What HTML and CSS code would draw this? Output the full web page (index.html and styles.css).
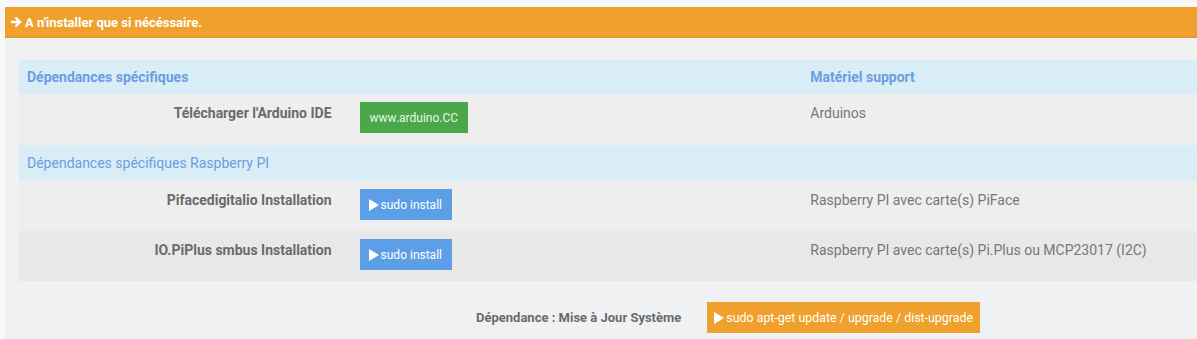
FILE: index.html
```html
<!DOCTYPE html>
<html lang="fr">
<head>
  <meta charset="UTF-8">
  <title>Dépendances</title>
  <link rel="stylesheet" href="styles.css">
</head>
<body>
  <div class="page">
    <div class="alert">
      <svg class="arrow" viewBox="0 0 12 12" width="12" height="12"><path d="M1 6h9M5.5 1.5l4.5 4.5-4.5 4.5" fill="none" stroke="#fff" stroke-width="2.4"/></svg>
      A n'installer que si nécéssaire.
    </div>
    <div class="panel">
      <table class="deps">
        <tr class="head">
          <th colspan="2">Dépendances spécifiques</th>
          <th>Matériel support</th>
        </tr>
        <tr class="row first">
          <td class="label">Télécharger l'Arduino IDE</td>
          <td class="action"><a class="btn btn-green">www.arduino.CC</a></td>
          <td class="hw">Arduinos</td>
        </tr>
        <tr class="sub">
          <td colspan="3">Dépendances spécifiques Raspberry PI</td>
        </tr>
        <tr class="row">
          <td class="label">Pifacedigitalio Installation</td>
          <td class="action"><a class="btn btn-blue"><span class="play"></span>sudo install</a></td>
          <td class="hw">Raspberry PI avec carte(s) PiFace</td>
        </tr>
        <tr class="row odd">
          <td class="label">IO.PiPlus smbus Installation</td>
          <td class="action"><a class="btn btn-blue"><span class="play"></span>sudo install</a></td>
          <td class="hw">Raspberry PI avec carte(s) Pi.Plus ou MCP23017 (I2C)</td>
        </tr>
      </table>
      <div class="update">
        <span class="update-label">Dépendance : Mise à Jour Système</span>
        <a class="btn btn-orange"><span class="play"></span>sudo apt-get update / upgrade / dist-upgrade</a>
      </div>
    </div>
  </div>
</body>
</html>
```

FILE: styles.css
```css
body {
  margin: 0;
  background-color: #f7f8fa;
  font-family: Roboto, "Liberation Sans", sans-serif;
  font-size: 14px;
  overflow: hidden;
}
.page {
  margin: 7px 0 0 5px;
}
.alert {
  height: 31px;
  background-color: #f0a02c;
  border-bottom: 1px solid #e0962a;
  box-sizing: border-box;
  color: #fff;
  font-size: 13px;
  font-weight: bold;
  padding: 0 5px;
  display: flex;
  align-items: center;
  gap: 3px;
}
.panel {
  background-color: #eff1f3;
  padding: 22px 0 40px 14px;
}
.deps {
  width: 1178px;
  border-collapse: collapse;
}
.deps th,
.deps td {
  padding: 0 8px;
  text-align: left;
}
.head {
  height: 34px;
}
.head th {
  background-color: #d9edf7;
  color: #6a9ee0;
  font-weight: bold;
}
.head th:last-child {
  width: 378px;
}
.sub {
  height: 36px;
}
.sub td {
  background-color: #d9edf7;
  color: #6a9ee0;
}
.row {
  height: 50px;
}
.row.first {
  height: 51px;
}
.row td {
  background-color: #eeeeee;
  vertical-align: top;
}
.row.odd td {
  background-color: #e8e8e8;
}
.row .label {
  width: 304px;
  text-align: right;
  color: #6b6b6b;
  font-weight: bold;
  padding-top: 11px;
  padding-right: 20px;
}
.row .action {
  padding-top: 8px;
  width: 434px;
}
.row .hw {
  color: #777;
  padding-top: 11px;
}
.btn {
  display: inline-flex;
  align-items: center;
  height: 31px;
  padding: 0 8px;
  font-size: 12px;
  color: #fff;
  box-sizing: border-box;
}
.btn-green {
  background-color: #4aa84a;
  color: #eaf6e4;
  padding: 0 10px;
}
.btn-blue {
  background-color: #5c9fe6;
  padding: 0 10px 0 9px;
}
.btn-orange {
  background-color: #f0a02c;
  font-size: 12.4px;
  padding: 0 7px;
}
.play {
  width: 0;
  height: 0;
  border-top: 6px solid transparent;
  border-bottom: 6px solid transparent;
  border-left: 10px solid #fff;
  margin-right: 2px;
}
.update {
  display: flex;
  align-items: center;
  margin-top: 21px;
  padding-left: 457px;
  gap: 26px;
}
.update-label {
  color: #6b6b6b;
  font-size: 13px;
  font-weight: bold;
}
```
